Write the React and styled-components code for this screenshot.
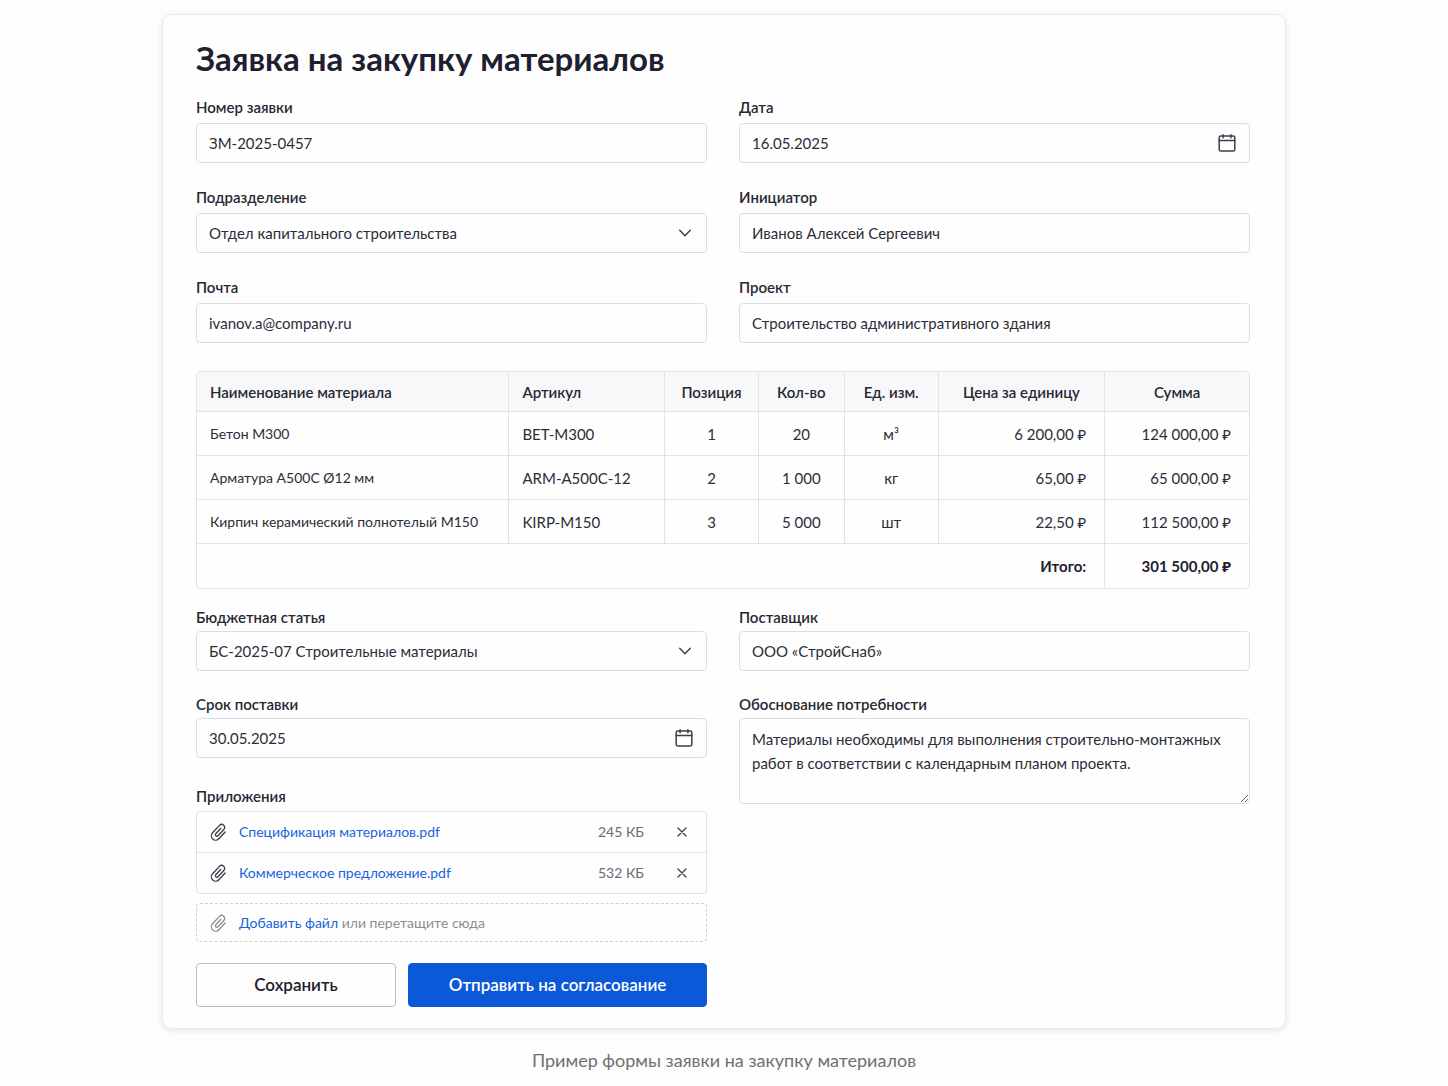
import { useState } from "react";
import styled, { createGlobalStyle } from "styled-components";

const materials = [
    { name: "Бетон М300", code: "BET-М300", position: 1, count: "20", unit: "м³", price: "6 200,00 ₽", sum: "124 000,00 ₽" },
    { name: "Арматура А500С Ø12 мм", code: "ARM-А500С-12", position: 2, count: "1 000", unit: "кг", price: "65,00 ₽", sum: "65 000,00 ₽" },
    { name: "Кирпич керамический полнотелый М150", code: "KIRP-М150", position: 3, count: "5 000", unit: "шт", price: "22,50 ₽", sum: "112 500,00 ₽" }
]

function CalendarIcon() {
    return (
        <svg width="20" height="20" viewBox="0 0 20 20" fill="none" stroke="currentColor" strokeWidth="1.5" strokeLinecap="round" aria-hidden="true">
            <rect x="2.2" y="3" width="15.6" height="15" rx="1.6" />
            <path d="M2.2 7.6h15.6M6.1 1.7v3M13.9 1.7v3" />
        </svg>
    )
}

function ChevronIcon() {
    return (
        <svg width="14" height="14" viewBox="0 0 14 14" fill="none" stroke="currentColor" strokeWidth="1.4" strokeLinecap="round" strokeLinejoin="round" aria-hidden="true">
            <path d="M1.7 4.2L7 9.7l5.3-5.5" />
        </svg>
    )
}

function ClipIcon() {
    return (
        <svg width="20" height="20" viewBox="0 0 24 24" fill="none" stroke="currentColor" strokeWidth="1.6" strokeLinecap="round" aria-hidden="true">
            <path transform="rotate(-47 12 12)" d="M16.5 10.6H7.8a1.8 1.8 0 0 0 0 3.6h10.4a3.6 3.6 0 0 0 0-7.2H6a5.2 5.2 0 0 0 0 10.4h11" />
        </svg>
    )
}

function CloseIcon() {
    return (
        <svg width="12" height="12" viewBox="0 0 12 12" fill="none" stroke="currentColor" strokeWidth="1.3" strokeLinecap="round" aria-hidden="true">
            <path d="M2 2l8 8M10 2l-8 8" />
        </svg>
    )
}

function TextField({ id, label, value, type = "text" }) {
    return (
        <Field>
            <Label htmlFor={id}>{label}</Label>
            <Input id={id} name={id} type={type} defaultValue={value} />
        </Field>
    )
}

function DateField({ id, label, value }) {
    return (
        <Field>
            <Label htmlFor={id}>{label}</Label>
            <Control>
                <Input id={id} name={id} type="text" defaultValue={value} />
                <CalendarButton type="button" aria-label="Открыть календарь"><CalendarIcon /></CalendarButton>
            </Control>
        </Field>
    )
}

function SelectField({ id, label, value }) {
    return (
        <Field>
            <Label htmlFor={id}>{label}</Label>
            <Control>
                <Select id={id} name={id} defaultValue={value}>
                    <option value={value}>{value}</option>
                </Select>
                <Arrow><ChevronIcon /></Arrow>
            </Control>
        </Field>
    )
}

function App() {
    const [files, setFiles] = useState([
        { name: "Спецификация материалов.pdf", size: "245 КБ" },
        { name: "Коммерческое предложение.pdf", size: "532 КБ" }
    ])

    function removeFile(name) {
        setFiles(files.filter(file => file.name !== name))
    }

    return (
        <Page>
            <GlobalStyle />
            <Card onSubmit={e => e.preventDefault()}>
                <Title>Заявка на закупку материалов</Title>

                <Fields>
                    <TextField id="number" label="Номер заявки" value="ЗМ-2025-0457" />
                    <DateField id="date" label="Дата" value="16.05.2025" />
                    <SelectField id="department" label="Подразделение" value="Отдел капитального строительства" />
                    <TextField id="initiator" label="Инициатор" value="Иванов Алексей Сергеевич" />
                    <TextField id="email" label="Почта" type="email" value="ivanov.a@company.ru" />
                    <TextField id="project" label="Проект" value="Строительство административного здания" />
                </Fields>

                <Table>
                    <colgroup>
                        <Col $share={313} />
                        <Col $share={156} />
                        <Col $share={94} />
                        <Col $share={86} />
                        <Col $share={94} />
                        <Col $share={167} />
                        <Col $share={144} />
                    </colgroup>
                    <thead>
                        <tr>
                            <HeadCell $align="left">Наименование материала</HeadCell>
                            <HeadCell $align="left">Артикул</HeadCell>
                            <HeadCell>Позиция</HeadCell>
                            <HeadCell>Кол-во</HeadCell>
                            <HeadCell>Ед. изм.</HeadCell>
                            <HeadCell>Цена за единицу</HeadCell>
                            <HeadCell>Сумма</HeadCell>
                        </tr>
                    </thead>
                    <tbody>
                        {materials.map(item => (
                            <tr key={item.position}>
                                <NameCell $align="left">{item.name}</NameCell>
                                <Cell $align="left">{item.code}</Cell>
                                <Cell>{item.position}</Cell>
                                <Cell>{item.count}</Cell>
                                <Cell>{item.unit}</Cell>
                                <Cell $align="right">{item.price}</Cell>
                                <Cell $align="right">{item.sum}</Cell>
                            </tr>
                        ))}
                    </tbody>
                    <tfoot>
                        <tr>
                            <TotalCell colSpan={6} $align="right">Итого:</TotalCell>
                            <TotalCell $align="right">301 500,00 ₽</TotalCell>
                        </tr>
                    </tfoot>
                </Table>

                <Columns>
                    <Stack>
                        <SelectField id="budget" label="Бюджетная статья" value="БС-2025-07 Строительные материалы" />
                        <DateField id="deadline" label="Срок поставки" value="30.05.2025" />
                    </Stack>
                    <Stack>
                        <TextField id="supplier" label="Поставщик" value="ООО «СтройСнаб»" />
                        <Field>
                            <Label htmlFor="reason">Обоснование потребности</Label>
                            <TextArea id="reason" name="reason" defaultValue="Материалы необходимы для выполнения строительно-монтажных работ в соответствии с календарным планом проекта." />
                        </Field>
                    </Stack>
                    <Attachments>
                        <Label as="h2">Приложения</Label>
                        <FileList>
                            {files.map(file => (
                                <FileRow key={file.name}>
                                    <ClipIcon />
                                    <FileLink href="#">{file.name}</FileLink>
                                    <FileSize>{file.size}</FileSize>
                                    <RemoveButton type="button" aria-label={`Удалить ${file.name}`} onClick={() => removeFile(file.name)}>
                                        <CloseIcon />
                                    </RemoveButton>
                                </FileRow>
                            ))}
                        </FileList>
                        <DropZone>
                            <ClipIcon />
                            <span><AddButton type="button">Добавить файл</AddButton> или перетащите сюда</span>
                        </DropZone>
                        <Actions>
                            <SaveButton type="button">Сохранить</SaveButton>
                            <SubmitButton type="submit">Отправить на согласование</SubmitButton>
                        </Actions>
                    </Attachments>
                </Columns>
            </Card>
            <Caption>Пример формы заявки на закупку материалов</Caption>
        </Page>
    )
}

const GlobalStyle = createGlobalStyle`
    *{
        box-sizing: border-box;
    }
    body{
        margin: 0;
        background-color: #fdfdfd;
        color: #2b2d38;
        font-family: Lato, 'Noto Sans', sans-serif;
        font-size: 15px;
        line-height: 20px;
    }
    input, select, textarea, button{
        font: inherit;
        color: inherit;
    }
`
const Page = styled.main`
    display: flex;
    flex-direction: column;
    align-items: center;
    padding: 14px 16px;
`
const Card = styled.form`
    width: 100%;
    max-width: 1124px;
    padding: 22px 35px 21px 33px;
    background-color: #fefefe;
    border: 1px solid #e9eaed;
    border-radius: 10px;
    box-shadow: 0 2px 6px rgba(20, 22, 36, 0.09);
`
const Title = styled.h1`
    margin: 0 0 18px;
    font-size: 33px;
    line-height: 42px;
    font-weight: 700;
    color: #1e2030;
`
const Fields = styled.div`
    display: grid;
    grid-template-columns: 1fr 1fr;
    gap: 24px 32px;
`
const Field = styled.div`
    display: flex;
    flex-direction: column;
    gap: 6px;
`
const Label = styled.label`
    margin: 0;
    font-size: 15px;
    line-height: 20px;
    font-weight: 600;
    color: #262833;
`
const Control = styled.div`
    position: relative;
    display: flex;
`
const Input = styled.input`
    width: 100%;
    height: 40px;
    padding: 0 12px;
    background-color: #fefefe;
    border: 1px solid #dddee4;
    border-radius: 4px;
`
const Select = styled.select`
    width: 100%;
    height: 40px;
    padding: 0 40px 0 12px;
    appearance: none;
    background-color: #fefefe;
    border: 1px solid #dddee4;
    border-radius: 4px;
`
const Arrow = styled.span`
    position: absolute;
    top: 0;
    right: 15px;
    height: 100%;
    display: flex;
    align-items: center;
    color: #3c3f4b;
    pointer-events: none;
`
const CalendarButton = styled.button`
    position: absolute;
    top: 0;
    right: 13px;
    height: 100%;
    display: flex;
    align-items: center;
    padding: 0;
    background: none;
    border: none;
    color: #3c3f4b;
    cursor: pointer;
`
const Table = styled.table`
    width: 100%;
    margin: 28px 0 18px;
    table-layout: fixed;
    border-collapse: separate;
    border-spacing: 0;
    border: 1px solid #e2e3e8;
    border-radius: 4px;
    overflow: hidden;
`
const Col = styled.col`
    width: ${props => props.$share / 1054 * 100}%;
`
const Cell = styled.td`
    height: 44px;
    padding: ${props => props.$align === "right" ? "0 18px 0 0" : props.$align === "left" ? "0 0 0 13px" : "0"};
    text-align: ${props => props.$align || "center"};
    white-space: nowrap;
    border-bottom: 1px solid #e2e3e8;
    border-right: 1px solid #e2e3e8;
    &:last-child{
        border-right: none;
    }
`
const NameCell = styled(Cell)`
    font-size: 14px;
`
const HeadCell = styled(Cell).attrs({ as: "th" })`
    height: 40px;
    font-weight: 600;
    color: #262833;
    background-color: #f8f8fa;
`
const TotalCell = styled(Cell)`
    font-weight: 700;
    color: #1e2030;
    border-bottom: none;
`
const Columns = styled.div`
    display: grid;
    grid-template-columns: 1fr 1fr;
    column-gap: 32px;
    align-items: start;
`
const Stack = styled.div`
    display: flex;
    flex-direction: column;
    gap: 23px;
    ${Field}{
        gap: 4px;
    }
    &:nth-child(2){
        grid-row: 1 / span 2;
        grid-column: 2;
    }
`
const TextArea = styled.textarea`
    display: block;
    width: 100%;
    height: 86px;
    padding: 8px 12px;
    line-height: 24px;
    background-color: #fefefe;
    border: 1px solid #dddee4;
    border-radius: 4px;
    resize: vertical;
`
const Attachments = styled.section`
    display: flex;
    flex-direction: column;
    padding-top: 28px;
`
const FileList = styled.ul`
    margin: 5px 0 9px;
    padding: 0;
    list-style: none;
    font-size: 14px;
    border: 1px solid #e0e1e6;
    border-radius: 4px;
`
const FileRow = styled.li`
    display: flex;
    align-items: center;
    height: 40px;
    padding: 0 18px 0 12px;
    color: #3c3f4b;
    & + &{
        height: 41px;
        border-top: 1px solid #e0e1e6;
    }
`
const FileLink = styled.a`
    flex: 1;
    margin-left: 10px;
    color: #1863dc;
    text-decoration: none;
`
const FileSize = styled.span`
    color: #686b76;
`
const RemoveButton = styled.button`
    display: flex;
    margin-left: 32px;
    padding: 0;
    background: none;
    border: none;
    cursor: pointer;
`
const DropZone = styled.div`
    display: flex;
    align-items: center;
    gap: 10px;
    height: 39px;
    padding: 0 12px;
    font-size: 14px;
    color: #8c8e97;
    border: 1px dashed #cfd0d5;
    border-radius: 4px;
`
const AddButton = styled.button`
    padding: 0;
    background: none;
    border: none;
    color: #1863dc;
    cursor: pointer;
`
const Actions = styled.div`
    display: flex;
    gap: 12px;
    margin-top: 21px;
`
const SaveButton = styled.button`
    flex: 2;
    height: 44px;
    padding: 0;
    background-color: #fefefe;
    border: 1px solid #b9bac3;
    border-radius: 4px;
    font-size: 17px;
    font-weight: 600;
    color: #1e2030;
    cursor: pointer;
`
const SubmitButton = styled(SaveButton)`
    flex: 3;
    background-color: #0b59d8;
    border-color: #0b59d8;
    color: #ffffff;
`
const Caption = styled.p`
    margin: 19px 0 0;
    font-size: 18px;
    line-height: 24px;
    color: #707070;
`
export default App;
